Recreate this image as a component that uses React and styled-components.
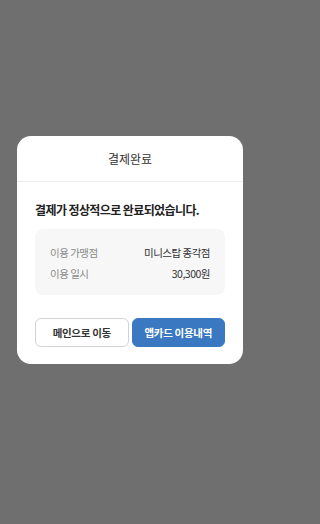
import React from 'react'
import styled, { createGlobalStyle } from 'styled-components';

const GlobalStyle = createGlobalStyle`
    * { box-sizing: border-box; }
    html, body { margin: 0; padding: 0; background-color: #6f6f6f; }
    body { font-family: "Noto Sans CJK KR", "Noto Sans", sans-serif; }
`;

const rows = [
    { label: '이용 가맹점', value: '미니스탑 종각점' },
    { label: '이용 일시', value: '30,300원' },
];

export default function App() {
    return (
        <>
            <GlobalStyle />
            <Screen>
                <Modal>
                    <ModalHeader>결제완료</ModalHeader>
                    <ModalBody>
                        <Message>결제가 정상적으로 완료되었습니다.</Message>
                        <InfoBox>
                            {rows.map((row) => (
                                <InfoRow key={row.label}>
                                    <InfoLabel>{row.label}</InfoLabel>
                                    <InfoValue>{row.value}</InfoValue>
                                </InfoRow>
                            ))}
                        </InfoBox>
                        <ButtonRow>
                            <ActionButton>메인으로 이동</ActionButton>
                            <ActionButton $primary>앱카드 이용내역</ActionButton>
                        </ButtonRow>
                    </ModalBody>
                </Modal>
            </Screen>
        </>
    )
}

const Screen = styled.main`
    display: flex;
    justify-content: center;
    align-items: flex-start;
    width: 260px;
    height: 524px;
    padding-top: 136px;
`;

const Modal = styled.section`
    display: flex;
    flex-direction: column;
    width: 226px;
    border-radius: 14px;
    background-color: #ffffff;
    overflow: hidden;
`;

const ModalHeader = styled.h2`
    display: flex;
    justify-content: center;
    align-items: center;
    height: 46px;
    margin: 0;
    font-size: 12px;
    font-weight: 400;
    color: #333333;
    border-bottom: 1px solid #ececec;
`;

const ModalBody = styled.div`
    display: flex;
    flex-direction: column;
    padding: 19px 18px 17px;
`;

const Message = styled.p`
    margin: 0 0 10px;
    font-size: 12px;
    font-weight: 700;
    line-height: 18px;
    color: #222222;
    letter-spacing: -0.6px;
`;

const InfoBox = styled.div`
    display: flex;
    flex-direction: column;
    gap: 5px;
    padding: 15px 15px 14px;
    border-radius: 8px;
    background-color: #f7f7f8;
`;

const InfoRow = styled.div`
    display: flex;
    justify-content: space-between;
    align-items: center;
    height: 16px;
    font-size: 10.5px;
    letter-spacing: -0.5px;
`;

const InfoLabel = styled.span`
    color: #8a8a8a;
`;

const InfoValue = styled.span`
    color: #333333;
`;

const ButtonRow = styled.div`
    display: grid;
    grid-template-columns: 1fr 1fr;
    gap: 3px;
    margin-top: 23px;
`;

const ActionButton = styled.button`
    height: 29px;
    padding: 0;
    font-family: inherit;
    font-size: 10.5px;
    font-weight: 700;
    letter-spacing: -0.3px;
    border-radius: 6px;
    border: 1px solid ${({ $primary }) => ($primary ? '#3a78c2' : '#d3d3d3')};
    background-color: ${({ $primary }) => ($primary ? '#3a78c2' : '#ffffff')};
    color: ${({ $primary }) => ($primary ? '#ffffff' : '#333333')};
`;
